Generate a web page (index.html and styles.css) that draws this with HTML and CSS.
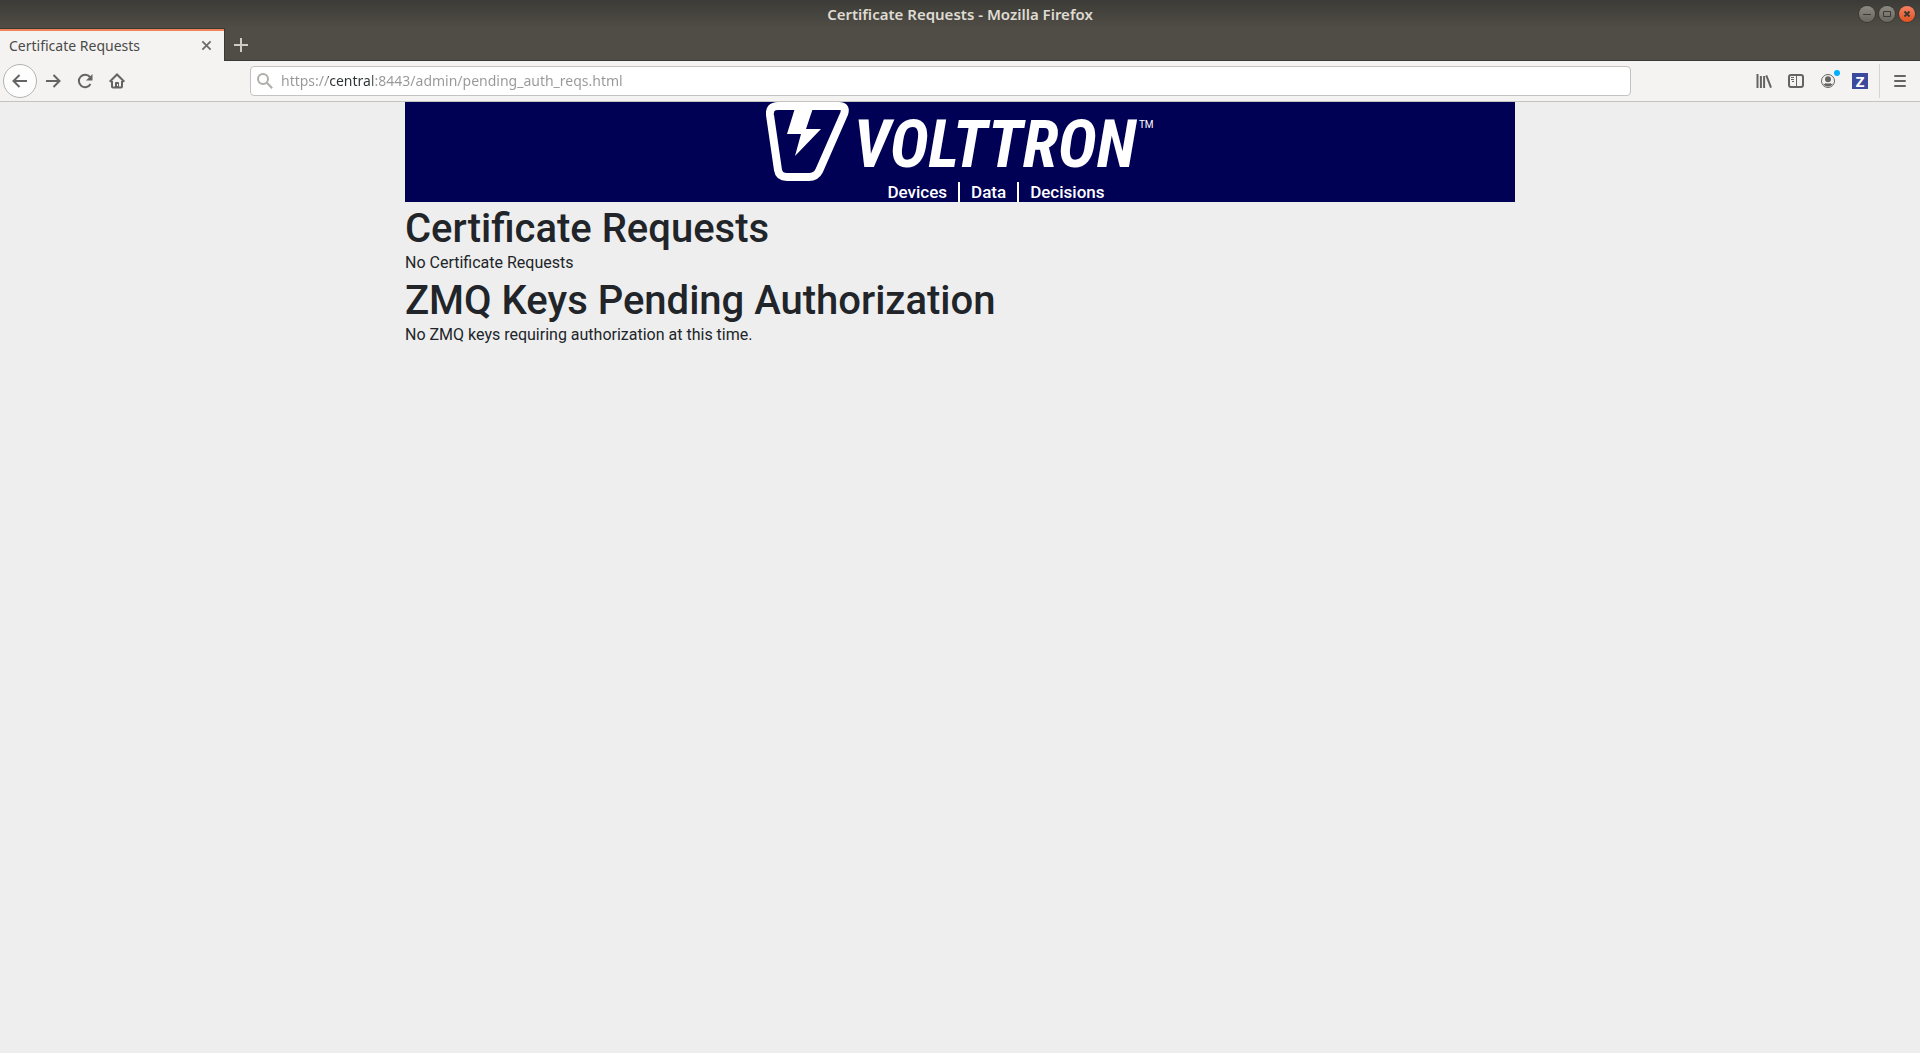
FILE: index.html
```html
<!DOCTYPE html>
<html lang="en">
<head>
<meta charset="utf-8">
<title>Certificate Requests</title>
<link rel="stylesheet" href="styles.css">
</head>
<body>
<header class="browser">
  <div class="titlebar">
    <span class="window-title">Certificate Requests - Mozilla Firefox</span>
    <div class="window-controls">
      <button class="window-button" type="button" aria-label="Minimize"><svg viewBox="0 0 16 16"><path d="M4 8.500H12"/></svg></button>
      <button class="window-button" type="button" aria-label="Maximize"><svg viewBox="0 0 16 16"><path d="M4.500 5.500h7v5h-7z"/></svg></button>
      <button class="window-button window-close" type="button" aria-label="Close window"><svg viewBox="0 0 16 16"><path d="M5.500 5.500l5 5M10.500 5.500l-5 5"/></svg></button>
    </div>
  </div>
  <div class="tabstrip">
    <div class="tab">
      <span class="tab-title">Certificate Requests</span>
      <button class="tab-close" type="button" aria-label="Close tab"><svg viewBox="0 0 12 12"><path d="M1.500 1.500l9 9M10.500 1.500l-9 9"/></svg></button>
    </div>
    <button class="new-tab" type="button" aria-label="New tab"><svg viewBox="0 0 14 14"><path d="M7 0v14M0 7h14"/></svg></button>
  </div>
  <nav class="toolbar">
    <div class="nav-buttons">
      <button class="tool back" type="button" aria-label="Back"><svg viewBox="0 0 16 16"><path d="M15 8H2M7.500 2L1.500 8l6 6"/></svg></button>
      <button class="tool" type="button" aria-label="Forward"><svg viewBox="0 0 16 16"><path d="M1 8h13M8.500 2l6 6-6 6"/></svg></button>
      <button class="tool" type="button" aria-label="Reload"><svg viewBox="0 0 16 16"><path d="M13.500 11A6.200 6.200 0 1 1 13 4.200"/><path class="solid" d="M15.500 1v6.500H9z"/></svg></button>
      <button class="tool" type="button" aria-label="Home"><svg viewBox="0 0 16 16"><path d="M.7 8.800L8 1.500l7.300 7.300M3 8v5.500q0 1 1 1h8q1 0 1-1V8"/><path class="solid" fill-rule="evenodd" d="M6 15v-5q0-1 1-1h2q1 0 1 1v5zM8 11h1v2H8z"/></svg></button>
    </div>
    <label class="address">
      <svg viewBox="0 0 16 16" aria-hidden="true"><circle cx="6" cy="6" r="5"/><path d="M9.800 9.800L15.200 15.200"/></svg>
      <input class="url" type="text" aria-label="Address" value="https://central:8443/admin/pending_auth_reqs.html">
    </label>
    <div class="actions">
      <button class="tool" type="button" aria-label="Library"><svg viewBox="0 0 16 16"><path d="M1.500 1v14M4.900 3v12M8.100 3v12M10.300 2.300l4.700 12.400"/></svg></button>
      <button class="tool" type="button" aria-label="Sidebars"><svg viewBox="0 0 16 16"><rect x="1" y="2" width="14" height="12" rx="2"/><path class="fine" d="M8.500 2v12M3 4.500h3M3 6.500h3M4 8.500h2"/></svg></button>
      <button class="tool account" type="button" aria-label="Account"><svg viewBox="0 0 16 16"><circle class="fine" cx="8" cy="8" r="6.500"/><circle class="solid" cx="8" cy="6.300" r="3"/><path class="solid" d="M3 10.500q2 1 2.500-.5q2.500 1 5 0q.5 1.500 2.500.5q-1.500 3-5 3t-5-3z"/></svg><span class="badge"></span></button>
      <button class="tool zotero" type="button" aria-label="Save to Zotero">Z</button>
      <button class="tool menu" type="button" aria-label="Menu"><svg viewBox="0 0 16 16"><path stroke-linecap="round" d="M3 3h10M3 8h10M3 13h10"/></svg></button>
    </div>
  </nav>
</header>
<main class="page">
  <div class="banner">
    <div class="brand">
      <svg class="emblem" viewBox="0 0 84 80" aria-hidden="true">
        <path class="shield" d="M12 4h61q8 0 5 8L53 69q-3 6-10 6H21q-8 0-9-7L4 13q-1-9 8-9z"/>
        <path class="bolt" d="M29 6h18L40 27h15L29 54l6-22H21z"/>
      </svg>
      <span class="wordmark">VOLTTRON</span>
      <span class="trademark">TM</span>
    </div>
    <div class="tagline"><span>Devices</span><span>Data</span><span>Decisions</span></div>
  </div>
  <section>
    <h1>Certificate Requests</h1>
    <p>No Certificate Requests</p>
  </section>
  <section>
    <h1>ZMQ Keys Pending Authorization</h1>
    <p>No ZMQ keys requiring authorization at this time.</p>
  </section>
</main>
</body>
</html>
```
FILE: styles.css
```css
* { box-sizing: border-box; }

body {
  margin: 0;
  min-height: 100vh;
  background: #eeeeee;
  color: #212529;
  font: 16px/23px Roboto, sans-serif;
}

button {
  display: flex;
  align-items: center;
  justify-content: center;
  padding: 0;
  border: 0;
  background: none;
  color: inherit;
}

svg { display: block; fill: none; stroke: currentColor; stroke-width: 2; }
.solid { fill: currentColor; stroke: none; }
.fine { stroke-width: 1; }

.browser { font-family: "Noto Sans", sans-serif; color: #4a4a48; }

.titlebar {
  display: grid;
  grid-template-columns: 1fr auto 1fr;
  align-items: center;
  height: 28px;
  padding: 0 5px;
  background: linear-gradient(#3c3b37, #504d46);
  color: #dfdbd2;
}
.window-title { grid-column: 2; font-size: 15px; font-weight: 600; }
.window-controls { display: flex; gap: 4px; justify-self: end; }
.window-button {
  width: 16px;
  height: 16px;
  border-radius: 50%;
  background: linear-gradient(#8c8a82, #67655e);
  box-shadow: 0 0 0 1px #3b3934;
  color: #3b3934;
}
.window-button svg { width: 16px; height: 16px; stroke-width: 1; }
.window-close { background: linear-gradient(#f58161, #e0531f); }
.window-close svg { stroke-width: 2; }

.tabstrip {
  display: flex;
  height: 33px;
  background: #504d46;
  box-shadow: inset 0 -1px #3b3934;
}
.tab {
  display: flex;
  align-items: center;
  justify-content: space-between;
  width: 225px;
  padding: 0 12px 0 9px;
  border-top: 1px solid #3b3934;
  border-right: 1px solid #3b3934;
  background: #f4f3f2;
  box-shadow: inset 0 2px #f0825a;
}
.tab-title { font-size: 14px; }
.tab-close svg { width: 11px; height: 11px; }
.tab-close { color: #6c6c6a; }
.new-tab { width: 32px; color: #cfccc5; }
.new-tab svg { width: 14px; height: 14px; }

.toolbar {
  display: flex;
  align-items: center;
  height: 41px;
  padding-left: 3px;
  border-bottom: 1px solid #c4c3c1;
  background: #f4f3f2;
}
.nav-buttons { display: flex; flex: 0 0 247px; }
.tool { width: 32px; height: 34px; color: #646462; }
.tool svg { width: 16px; height: 16px; }
.back {
  width: 34px;
  border: 1px solid #b4b3b1;
  border-radius: 50%;
  background: #fdfdfd;
}
.address {
  display: flex;
  flex: 1;
  align-items: center;
  gap: 8px;
  height: 30px;
  padding: 0 6px;
  border: 1px solid #c4c3c1;
  border-radius: 4px;
  background: #ffffff;
  color: #adadab;
}
.address svg { width: 16px; height: 16px; }
.url {
  flex: 1;
  min-width: 0;
  padding: 0;
  border: 0;
  outline: 0;
  background: linear-gradient(90deg, #979797 47px, #2e3436 47px, #2e3436 92px, #979797 92px);
  background-clip: text;
  color: transparent;
  font: 14px/24px "Noto Sans", sans-serif;
}
.actions { display: flex; flex: 0 0 289px; justify-content: flex-end; }
.account { position: relative; }
.badge {
  position: absolute;
  top: 6px;
  right: 4px;
  width: 6px;
  height: 6px;
  border-radius: 50%;
  background: #00b0ff;
}
.zotero {
  width: 16px;
  height: 16px;
  margin: 9px 11px 9px 8px;
  background: #3b4a9c;
  color: #ffffff;
  font: 700 15px/16px "Open Sans", sans-serif;
}
.menu { width: 41px; border-left: 1px solid #d5d4d2; }

.page { width: 100%; max-width: 1140px; margin: 0 auto; padding: 0 15px; }
.banner { height: 100px; overflow: hidden; background: #000055; color: #ffffff; }
.brand { display: flex; gap: 3px; justify-content: center; height: 80px; }
.emblem { width: 84px; height: 80px; }
.shield { stroke-width: 8; }
.bolt { fill: currentColor; stroke: none; }
.wordmark {
  font: italic 700 66px/86px "Roboto Condensed", Roboto, sans-serif;
}
.trademark { font-size: 10px; line-height: 46px; }
.tagline {
  display: flex;
  justify-content: center;
  padding-left: 72px;
  font-size: 17px;
  font-weight: 500;
  line-height: 20px;
}
.tagline span { padding: 0 11px; }
.tagline span + span { border-left: 2px solid currentColor; }

h1 { margin: 0; padding-top: 4px; font-size: 40px; font-weight: 500; line-height: 45px; }
p { margin: 0; }
```
